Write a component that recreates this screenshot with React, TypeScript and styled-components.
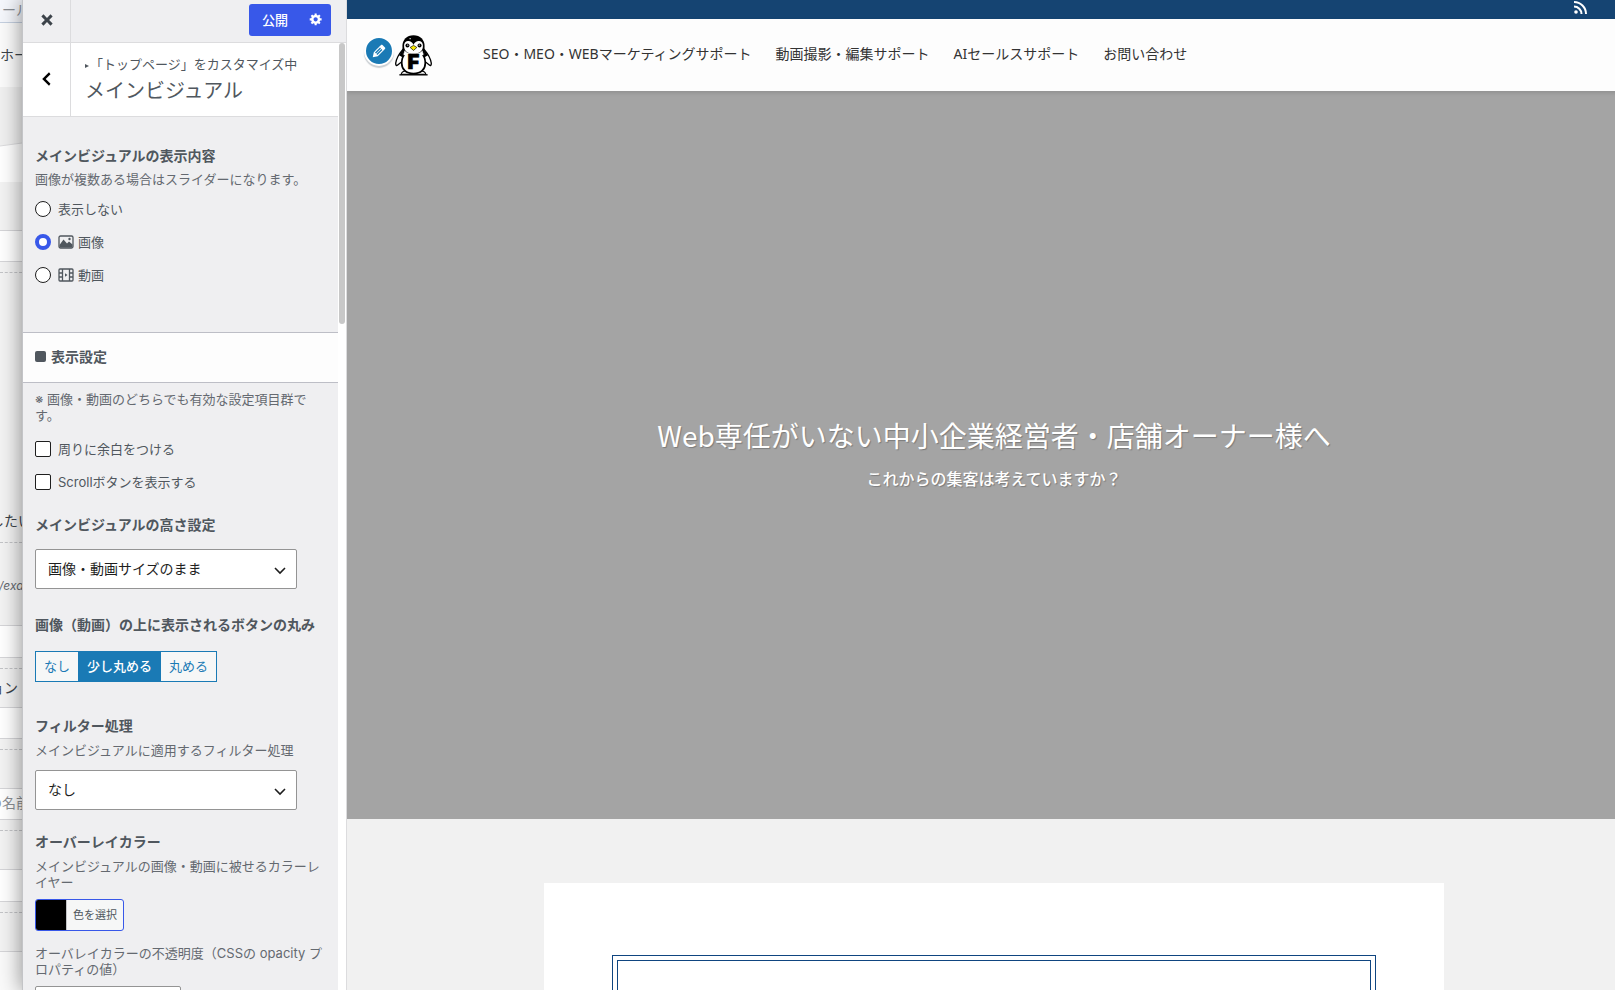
import React from 'react';
import styled, { createGlobalStyle } from 'styled-components';

const GlobalStyle = createGlobalStyle`
  *, *::before, *::after { box-sizing: border-box; }
  body {
    margin: 0;
    overflow: hidden;
    color: #50575e;
    font: 13px/16px Inter, "Noto Sans CJK JP", sans-serif;
  }
  button, select, input { font-family: inherit; margin: 0; }
  h1, h2, h3, p, fieldset, legend { margin: 0; padding: 0; border: 0; }
`;

const Screen = styled.div`
  display: flex;
  height: 100vh;
  overflow: hidden;
`;

/* ---------- page behind the customizer ---------- */

const Behind = styled.div`
  flex: 0 0 22px;
  overflow: hidden;
  display: flex;
  flex-direction: column;
  background: #f6f6f6;
`;

const Strip = styled.div<{ $h: number; $bg?: string; $line?: string; $indent?: number; $pad?: number }>`
  flex: 0 0 ${p => p.$h}px;
  background: ${p => p.$bg || '#f3f3f3'};
  border-bottom: ${p => (p.$line ? `1px ${p.$line}` : '0')};
  padding-top: ${p => p.$pad || 0}px;
  text-indent: ${p => p.$indent || 0}px;
  white-space: nowrap;
  overflow: hidden;
  color: #3c434a;
  font-size: 14px;
  line-height: 20px;
`;

const Muted = styled.span`
  color: #8c8f94;
`;

const Path = styled.em`
  color: #646970;
  font-size: 12px;
`;

const Slope = styled.svg`
  display: block;
`;

const SOLID = 'solid #d5d5d8';
const DASH = 'dashed #c3c4c7';

/* ---------- customizer panel ---------- */

const Sidebar = styled.aside`
  position: relative;
  z-index: 2;
  flex: 0 0 325px;
  display: flex;
  flex-direction: column;
  background: #efeff1;
  border-left: 1px solid #c3c4c7;
  border-right: 1px solid #dcdcde;
  box-shadow: 0 0 20px 1px rgba(0, 0, 0, 0.42);
`;

const TopBar = styled.div`
  flex: 0 0 43px;
  display: flex;
  align-items: center;
  border-bottom: 1px solid #dcdcde;
`;

const SideButton = styled.button`
  flex: 0 0 48px;
  align-self: stretch;
  display: grid;
  place-items: center;
  padding: 0 0 2px;
  border: 0;
  border-right: 1px solid #dcdcde;
  background: transparent;
  color: #3c434a;
`;

const BackButton = styled(SideButton)`
  color: #000;
`;

const PublishGroup = styled.div`
  display: flex;
  margin: 0 15px 2px auto;
  border-radius: 3px;
  overflow: hidden;
  background: #3858e9;
`;

const PublishButton = styled.button<{ $w: number }>`
  width: ${p => p.$w}px;
  height: 32px;
  display: grid;
  place-items: center;
  padding: 0 0 2px;
  border: 0;
  background: transparent;
  color: #fff;
  font-size: 13px;
  font-weight: 500;
`;

const Body = styled.div`
  flex: 1;
  min-height: 0;
  display: flex;
`;

const Scroll = styled.div`
  flex: 1;
  min-width: 0;
  overflow: hidden;
`;

const Track = styled.div`
  flex: 0 0 8px;
  padding: 0 1px;
  background: #fff;
`;

const Thumb = styled.div`
  height: 281px;
  border-radius: 3px;
  background: #c8c8c8;
`;

const PanelTitle = styled.header`
  display: flex;
  height: 74px;
  background: #fff;
  border-bottom: 1px solid #dcdcde;
`;

const TitleText = styled.div`
  padding: 13px 14px 0;
`;

const Crumb = styled.p`
  display: flex;
  align-items: center;
  height: 16px;
`;

const Triangle = styled.svg`
  margin: 3px 1px 0 0;
`;

const Title = styled.h1`
  margin-top: 6px;
  font-size: 20px;
  line-height: 26px;
  font-weight: 400;
`;

const Control = styled.fieldset<{ $top: number }>`
  margin: ${p => p.$top}px 12px 0;
  min-width: 0;
`;

const labelText = `
  display: block;
  font-size: 14px;
  line-height: 24px;
  font-weight: 700;
`;

const Legend = styled.legend`
  ${labelText}
`;

const Label = styled.label`
  ${labelText}
`;

const Note = styled.p<{ $top?: number }>`
  display: block;
  margin-top: ${p => p.$top || 0}px;
  color: #646970;
`;

const Options = styled.div<{ $top: number }>`
  margin-top: ${p => p.$top}px;
`;

const Option = styled.label`
  display: flex;
  align-items: center;
  height: 33px;
`;

const Choice = styled.input`
  appearance: none;
  width: 16px;
  height: 16px;
  margin-right: 7px;
  background: #fff;
  border: 1px solid #1e1e1e;
  border-radius: 2px;
  &[type='radio'] { border-radius: 50%; }
  &[type='radio']:checked { border: 4px solid #3858e9; }
`;

const OptionIcon = styled.svg`
  margin-right: 4px;
`;

const Section = styled.h2`
  display: flex;
  align-items: center;
  gap: 5px;
  height: 51px;
  margin-top: 41px;
  padding: 0 12px 2px;
  background: #fdfdfd;
  border: solid #bdbec6;
  border-width: 1px 0;
  font-size: 14px;
  font-weight: 700;
`;

const Square = styled.span`
  width: 11px;
  height: 11px;
  border-radius: 2px;
  background: #50575e;
`;

const SelectWrap = styled.div`
  position: relative;
  width: 262px;
  margin-top: 12px;
`;

const Select = styled.select`
  appearance: none;
  display: block;
  width: 100%;
  height: 40px;
  padding: 0 32px 2px 12px;
  border: 1px solid #949494;
  border-radius: 2px;
  background: #fff;
  color: #1e1e1e;
  font-size: 14px;
`;

const Chevron = styled.svg`
  position: absolute;
  right: 11px;
  top: 18px;
  pointer-events: none;
`;

const ButtonSet = styled.div`
  display: inline-flex;
  height: 31px;
  margin-top: 14px;
  vertical-align: top;
  border: 1px solid #1a7ab5;
`;

const SetOption = styled.label`
  display: grid;
  place-items: center;
  padding: 0 8px 2px;
  background: #f6f7f7;
  color: #1a7ab5;
  & + & { border-left: 1px solid #1a7ab5; }
  input { position: absolute; opacity: 0; pointer-events: none; }
  &:has(input:checked) {
    background: #1a7ab5;
    color: #fff;
    font-weight: 500;
  }
`;

const ColorButton = styled.button`
  display: flex;
  height: 32px;
  margin-top: 9px;
  padding: 0;
  border: 1px solid #3858e9;
  border-radius: 3px;
  overflow: hidden;
  background: #f6f7f7;
  color: #50575e;
  font-size: 11px;
  line-height: 30px;
`;

const Swatch = styled.span`
  width: 31px;
  height: 30px;
  background: #000;
  border-right: 1px solid #c3c4c7;
`;

const ColorText = styled.span`
  padding: 0 6px;
`;

const NumberInput = styled.input`
  display: block;
  width: 146px;
  height: 40px;
  margin-top: 9px;
  padding: 0 8px;
  border: 1px solid #949494;
  border-radius: 2px;
  background: #fff;
`;

/* ---------- site preview ---------- */

const Preview = styled.main`
  position: relative;
  z-index: 3;
  flex: 1;
  min-width: 0;
  overflow: hidden;
  background: #f1f1f1;
  font-family: "Noto Sans CJK JP", sans-serif;
`;

/* The previewed site is slightly wider than the visible area. */
const Site = styled.div`
  width: calc(100% + 26px);
`;

const Bar = styled.div`
  background: #154472;
`;

const Inner = styled.div`
  max-width: 1200px;
  margin: 0 auto;
  display: flex;
  align-items: center;
`;

const BarInner = styled(Inner)`
  height: 19px;
  justify-content: flex-end;
  padding: 0 7px 4px;
`;

const RssLink = styled.a`
  display: block;
  color: #fff;
  line-height: 0;
`;

const SiteHeader = styled.header`
  position: relative;
  background: #fdfdfd;
  box-shadow: 0 2px 4px rgba(0, 0, 0, 0.12);
`;

const HeaderInner = styled(Inner)`
  position: relative;
  height: 72px;
`;

const Logo = styled.a`
  display: block;
  padding-left: 1px;
  line-height: 0;
`;

const EditButton = styled.button`
  position: absolute;
  left: -30px;
  top: 17px;
  width: 30px;
  height: 30px;
  display: grid;
  place-items: center;
  padding: 0;
  border: 2px solid #fff;
  border-radius: 50%;
  background: #1a7ab5;
  color: #fff;
  box-shadow: 0 2px 1px rgba(46, 68, 83, 0.25);
`;

const Nav = styled.nav`
  display: flex;
  gap: 24px;
  margin-left: 51px;
  padding-bottom: 2px;
  a {
    color: #333;
    font-family: "Noto Sans", "Noto Sans CJK JP", sans-serif;
    font-size: 14px;
    line-height: 20px;
    text-decoration: none;
    white-space: nowrap;
  }
`;

const Hero = styled.section`
  height: 728px;
  padding-bottom: 6px;
  display: flex;
  flex-direction: column;
  align-items: center;
  justify-content: center;
  background: #a4a4a4;
  color: #fff;
  text-shadow: 1px 1px 1px rgba(0, 0, 0, 0.25);
`;

const HeroTitle = styled.h2`
  font-size: 28px;
  line-height: 42px;
  font-weight: 400;
`;

const HeroText = styled.p`
  margin-top: 10px;
  font-size: 16px;
  line-height: 24px;
  font-weight: 500;
`;

const Card = styled.article`
  max-width: 900px;
  margin: 64px auto 0;
  padding: 72px 68px;
  background: #fff;
`;

const Frame = styled.div`
  padding: 4px;
  border: 1px solid #0f4580;
`;

const FrameInner = styled.div`
  height: 300px;
  border: 1px solid #0f4580;
`;

const Dashicon = ({ d, size = 20 }: { d: string; size?: number }) => (
  <svg width={size} height={size} viewBox="0 0 20 20" fill="currentColor" aria-hidden="true">
    <path d={d} />
  </svg>
);

const ICON = {
  close: 'M12.12 10l3.53 3.53-2.12 2.12L10 12.12l-3.54 3.54-2.12-2.12L7.88 10 4.34 6.46l2.12-2.12L10 7.88l3.54-3.53 2.12 2.12z',
  back: 'M13.500 5.200l-4.800 4.800 4.800 4.800-1.500 2-6.800-6.800 6.800-6.800z',
  gear: 'M18 12h-2.18c-.17.7-.44 1.35-.81 1.93l1.54 1.54-2.1 2.1-1.54-1.54c-.58.36-1.23.63-1.91.79V19H8v-2.18c-.68-.16-1.33-.43-1.91-.79l-1.54 1.54-2.12-2.12 1.54-1.54c-.36-.58-.63-1.23-.79-1.91H1V9.03h2.17c.16-.7.44-1.35.8-1.94L2.43 5.55l2.1-2.1 1.54 1.54c.58-.37 1.24-.64 1.93-.81V2h3v2.18c.68.16 1.33.43 1.91.79l1.54-1.54 2.12 2.12-1.54 1.54c.36.59.64 1.24.8 1.94H18V12zm-8.5 1.5c1.66 0 3-1.34 3-3s-1.34-3-3-3-3 1.34-3 3 1.34 3 3 3z',
  edit: 'M13.89 3.39l2.71 2.72c.46.46.42 1.24.03 1.64l-8.01 8.02-5.56 1.16 1.16-5.58s7.6-7.63 7.99-8.03c.39-.39 1.22-.39 1.68.07zm-2.73 2.79l-5.59 5.61 1.11 1.11 5.54-5.65zm-2.97 8.23l5.58-5.6-1.07-1.08-5.59 5.6z',
};

const SelectBox = ({ id, value }: { id: string; value: string }) => (
  <SelectWrap>
    <Select id={id} defaultValue={value}>
      <option>{value}</option>
    </Select>
    <Chevron width="12" height="8" viewBox="0 0 12 8" fill="none" stroke="#1e1e1e" strokeWidth="1.600" aria-hidden="true">
      <path d="M1 1l5 5 5-5" />
    </Chevron>
  </SelectWrap>
);

const PenguinLogo = () => (
  <svg width="37" height="41" viewBox="0 0 110 122" role="img" aria-label="ロゴ">
    <path d="M24 42C12 56 4 70 2 84c0 6 2 8 5 6l15-12z" fill="#fff" stroke="#000" strokeWidth="4" />
    <path d="M86 42c12 14 20 28 22 42 0 6-2 8-5 6L88 78z" fill="#fff" stroke="#000" strokeWidth="4" />
    <path d="M24 42L12 60l10 6zM86 42l12 18-10 6z" fill="#000" />
    <path d="M18 117q2-9 14-10h46q12 1 14 10z" fill="#fff" stroke="#000" strokeWidth="3" />
    <path d="M55 48c24 0 35 16 35 36 0 18-13 31-35 31S20 102 20 84c0-20 11-36 35-36z" fill="#fff" stroke="#000" strokeWidth="5" />
    <path d="M55 1c20 0 33 14 33 32 0 8-1 16-3 22H25c-2-6-3-14-3-22C22 15 35 1 55 1z" fill="#000" />
    <path d="M55 29c4-9 11-12 17-11 8 1 12 8 11 17-1 13-12 21-28 21S28 48 27 35c-1-9 3-16 11-17 6-1 13 2 17 11z" fill="#fff" />
    <path d="M28 46c8 8 17 11 27 11s19-3 27-11l2 14H26z" fill="#fff" />
    <circle cx="37" cy="31" r="6" fill="#000" />
    <circle cx="73" cy="31" r="6" fill="#000" />
    <circle cx="38" cy="30" r="2" fill="#fff" />
    <circle cx="72" cy="30" r="2" fill="#fff" />
    <circle cx="45" cy="11" r="2" fill="#fff" />
    <path d="M45 37l10-6 10 6-10 9z" fill="#f7e600" stroke="#000" strokeWidth="2" />
    <text x="55" y="102" textAnchor="middle" fontFamily="Inter, sans-serif" fontWeight="900" fontSize="60" stroke="#000" strokeWidth="2">F</text>
    <path d="M13 118.500h84" stroke="#000" strokeWidth="4" />
  </svg>
);

export default function App() {
  return (
    <>
      <GlobalStyle />
      <Screen>
        <Behind aria-hidden="true">
          <Strip $h={23} $bg="#f5f7fc" $line="solid #c5d0e0" $indent={2}><Muted>ール</Muted></Strip>
          <Strip $h={64} $bg="#fbfbfb" $pad={22}>ホー</Strip>
          <Strip $h={95} $bg="#fff">
            <Slope width="22" height="60" viewBox="0 0 22 60">
              <path d="M0 0h22v56L0 59z" fill="#f0f0f0" />
              <path d="M0 59l22-3" stroke="#dcdcde" />
            </Slope>
          </Strip>
          <Strip $h={49} $line={SOLID} />
          <Strip $h={31} $bg="#fff" $line={SOLID} />
          <Strip $h={11} $line={DASH} />
          <Strip $h={270} $line={DASH} $pad={238} $indent={-10}>したい</Strip>
          <Strip $h={83} $line={SOLID} $pad={32} $indent={-1}><Path>/exa</Path></Strip>
          <Strip $h={32} $bg="#fff" $line={SOLID} />
          <Strip $h={11} $line={DASH} />
          <Strip $h={39} $line={SOLID} $pad={9} $indent={-10}>ョン</Strip>
          <Strip $h={31} $bg="#fff" $line={SOLID} />
          <Strip $h={11} $line={DASH} />
          <Strip $h={39} $line={SOLID} />
          <Strip $h={31} $bg="#fff" $line={SOLID} $pad={4} $indent={-12}><Muted>の名前</Muted></Strip>
          <Strip $h={11} $line={DASH} />
          <Strip $h={39} $line={SOLID} />
          <Strip $h={32} $bg="#fff" $line={SOLID} />
          <Strip $h={11} $line={DASH} />
          <Strip $h={39} $line={SOLID} />
          <Strip $h={39} $bg="#fafafa" />
        </Behind>

        <Sidebar>
          <TopBar>
            <SideButton type="button" aria-label="閉じる"><Dashicon d={ICON.close} /></SideButton>
            <PublishGroup>
              <PublishButton type="button" $w={52}>公開</PublishButton>
              <PublishButton type="button" $w={30} aria-label="公開設定"><Dashicon d={ICON.gear} size={14} /></PublishButton>
            </PublishGroup>
          </TopBar>
          <Body>
            <Scroll>
              <PanelTitle>
                <BackButton type="button" aria-label="戻る"><Dashicon d={ICON.back} /></BackButton>
                <TitleText>
                  <Crumb>
                    <Triangle width="4" height="4" viewBox="0 0 4 4" fill="#50575e" aria-hidden="true"><path d="M0 0l4 2-4 2z" /></Triangle>
                    「トップページ」をカスタマイズ中
                  </Crumb>
                  <Title>メインビジュアル</Title>
                </TitleText>
              </PanelTitle>

              <Control $top={27}>
                <Legend>メインビジュアルの表示内容</Legend>
                <Note $top={3}>画像が複数ある場合はスライダーになります。</Note>
                <Options $top={5}>
                  <Option><Choice type="radio" name="content" />表示しない</Option>
                  <Option>
                    <Choice type="radio" name="content" defaultChecked />
                    <OptionIcon width="16" height="14" viewBox="0 0 16 14" aria-hidden="true">
                      <rect x="1" y="1" width="14" height="12" rx="1.500" fill="none" stroke="#50575e" strokeWidth="1.300" />
                      <path d="M1.500 10l4-5.500 3.500 4 2-2 3.500 3V12.500h-13z" fill="#50575e" />
                      <circle cx="11.500" cy="4" r="1.200" fill="#50575e" />
                    </OptionIcon>
                    画像
                  </Option>
                  <Option>
                    <Choice type="radio" name="content" />
                    <OptionIcon width="16" height="14" viewBox="0 0 16 14" fill="none" stroke="#50575e" strokeWidth="1.300" aria-hidden="true">
                      <rect x="1" y="1" width="14" height="12" rx="1" />
                      <path d="M4.500 1v12M11.500 1v12M1 5h3.500M1 9h3.500M11.500 5H15M11.500 9H15" />
                      <path d="M7 5.200L9.500 7 7 8.800z" fill="#50575e" stroke="none" />
                    </OptionIcon>
                    動画
                  </Option>
                </Options>
              </Control>

              <Section><Square />表示設定</Section>

              <Control $top={8}>
                <Note>※ 画像・動画のどちらでも有効な設定項目群です。</Note>
                <Options $top={9}>
                  <Option><Choice type="checkbox" />周りに余白をつける</Option>
                  <Option><Choice type="checkbox" />Scrollボタンを表示する</Option>
                </Options>
              </Control>

              <Control $top={15}>
                <Label htmlFor="height">メインビジュアルの高さ設定</Label>
                <SelectBox id="height" value="画像・動画サイズのまま" />
              </Control>

              <Control $top={24}>
                <Legend>画像（動画）の上に表示されるボタンの丸み</Legend>
                <ButtonSet>
                  <SetOption><input type="radio" name="round" />なし</SetOption>
                  <SetOption><input type="radio" name="round" defaultChecked />少し丸める</SetOption>
                  <SetOption><input type="radio" name="round" />丸める</SetOption>
                </ButtonSet>
              </Control>

              <Control $top={32}>
                <Label htmlFor="filter">フィルター処理</Label>
                <Note $top={4}>メインビジュアルに適用するフィルター処理</Note>
                <SelectBox id="filter" value="なし" />
              </Control>

              <Control $top={20}>
                <Legend>オーバーレイカラー</Legend>
                <Note $top={4}>メインビジュアルの画像・動画に被せるカラーレイヤー</Note>
                <ColorButton type="button"><Swatch /><ColorText>色を選択</ColorText></ColorButton>
              </Control>

              <Control $top={14}>
                <Note as="label" htmlFor="opacity">オーバレイカラーの不透明度（CSSの opacity プロパティの値）</Note>
                <NumberInput id="opacity" type="number" />
              </Control>
            </Scroll>
            <Track><Thumb /></Track>
          </Body>
        </Sidebar>

        <Preview>
          <Site>
            <Bar>
              <BarInner>
                <RssLink href="#rss" aria-label="RSS">
                  <svg width="13" height="13" viewBox="0 0 13 13" fill="none" stroke="#fff" strokeWidth="2">
                    <circle cx="2" cy="11" r="1.800" fill="#fff" stroke="none" />
                    <path d="M0 5.500A7.500 7.500 0 0 1 7.500 13M0 1a12 12 0 0 1 12 12" />
                  </svg>
                </RssLink>
              </BarInner>
            </Bar>
            <SiteHeader>
              <HeaderInner>
                <Logo href="#top"><PenguinLogo /></Logo>
                <EditButton type="button" aria-label="編集"><Dashicon d={ICON.edit} size={18} /></EditButton>
                <Nav>
                  <a href="#seo">SEO・MEO・WEBマーケティングサポート</a>
                  <a href="#movie">動画撮影・編集サポート</a>
                  <a href="#ai">AIセールスサポート</a>
                  <a href="#contact">お問い合わせ</a>
                </Nav>
              </HeaderInner>
            </SiteHeader>
            <Hero>
              <HeroTitle>Web専任がいない中小企業経営者・店舗オーナー様へ</HeroTitle>
              <HeroText>これからの集客は考えていますか？</HeroText>
            </Hero>
            <Card>
              <Frame><FrameInner /></Frame>
            </Card>
          </Site>
        </Preview>
      </Screen>
    </>
  );
}
